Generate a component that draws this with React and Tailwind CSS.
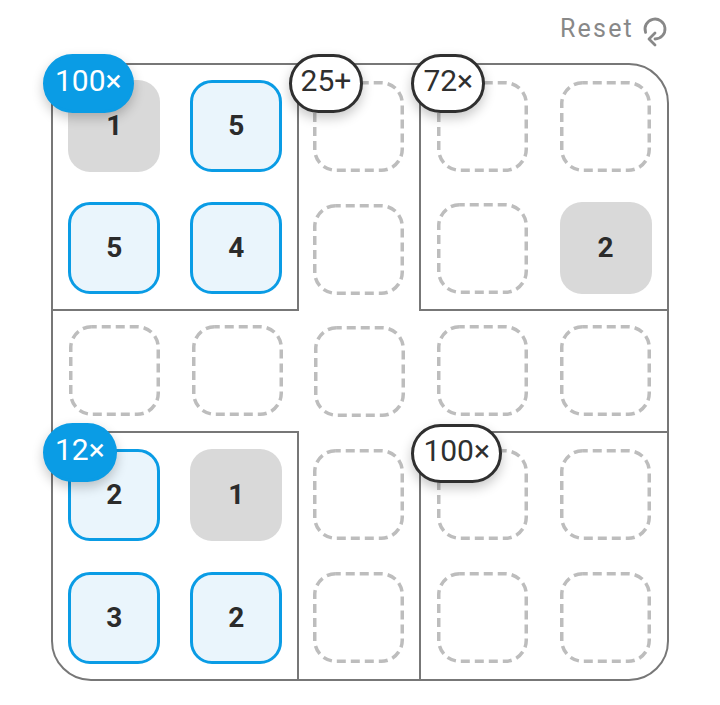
import React from "react";

const cage = [
  "AABCC",
  "AABCC",
  "BBBBB",
  "DDBEE",
  "DDBEE",
];

const vals = [
  [["g", 1], ["b", 5], null, null, null],
  [["b", 5], ["b", 4], null, null, ["g", 2]],
  [null, null, null, null, null],
  [["b", 2], ["g", 1], null, null, null],
  [["b", 3], ["b", 2], null, null, null],
];

const badges = {
  "0-0": { t: "100×", blue: true, top: "top-[-11px]" },
  "0-2": { t: "25+", blue: false, top: "top-[-11px]" },
  "0-3": { t: "72×", blue: false, top: "top-[-11px]" },
  "3-0": { t: "12×", blue: true, top: "top-[-10px]" },
  "3-3": { t: "100×", blue: false, top: "top-[-9px]" },
};

function Badge({ t, blue, top }) {
  const cls = blue
    ? "bg-[#0a9ce5] border-[#0a9ce5] text-white"
    : "bg-white border-[#2f2f2f] text-[#2f2f2f]";
  return (
    <div
      className={`absolute left-[-10px] ${top} z-10 h-[59px] px-[9px] pb-[5px] rounded-full border-[3px] flex items-center justify-center text-[30px] font-normal leading-none shadow-[0_5px_12px_rgba(0,0,0,0.22)] ${cls}`}
    >
      {t}
    </div>
  );
}

function Tile({ v }) {
  if (!v) {
    return (
      <svg width="91" height="91" viewBox="0 0 91 91" className="block">
        <rect
          x="1.75"
          y="1.75"
          width="87.5"
          height="87.5"
          rx="21"
          fill="none"
          stroke="#bdbdbd"
          strokeWidth="3.5"
          strokeDasharray="9 5"
          strokeDashoffset="4"
        />
      </svg>
    );
  }
  const [kind, n] = v;
  if (kind === "g") {
    return (
      <div className="w-[92px] h-[92px] rounded-[22px] bg-[#d9d9d9] flex items-center justify-center text-[28px] font-bold text-[#2b2b2b]">
        {n}
      </div>
    );
  }
  return (
    <div className="w-[92px] h-[92px] rounded-[22px] border-[3px] border-[#0a9ce5] bg-[#eaf5fc] flex items-center justify-center text-[28px] font-bold text-[#2b2b2b]">
      {n}
    </div>
  );
}

export default function App() {
  const cells = [];
  for (let r = 0; r < 5; r++) {
    for (let c = 0; c < 5; c++) {
      const right = c < 4 && cage[r][c + 1] !== cage[r][c];
      const bottom = r < 4 && cage[r + 1][c] !== cage[r][c];
      const b = badges[`${r}-${c}`];
      cells.push(
        <div
          key={`${r}-${c}`}
          className={`relative flex items-center justify-center border-[#777] ${right ? "border-r-2" : ""} ${bottom ? "border-b-2" : ""}`}
        >
          <Tile v={vals[r][c]} />
          {b && <Badge {...b} />}
        </div>
      );
    }
  }
  return (
    <div
      className="w-[720px] h-[705px] bg-white"
      style={{ fontFamily: "Roboto, 'Liberation Sans', sans-serif" }}
    >
      <div className="h-[63px] flex justify-end items-start pt-[11px] pr-[47px]">
        <div className="flex items-center gap-[3px]">
          <span className="text-[25px] leading-[30px] tracking-[2.2px] text-[#888888]">Reset</span>
          <svg width="36" height="36" viewBox="0 0 36 36" fill="none" stroke="#888888" strokeWidth="2.8" strokeLinecap="round" strokeLinejoin="round">
            <path d="M8.6 21.4 A10 10 0 1 1 18 28" />
            <path d="M18 22 L12 28 L18 34" />
          </svg>
        </div>
      </div>
      <div className="ml-[51px] w-[618px] h-[618px] border-2 border-[#777] rounded-[40px] grid grid-cols-5 grid-rows-5">
        {cells}
      </div>
    </div>
  );
}
